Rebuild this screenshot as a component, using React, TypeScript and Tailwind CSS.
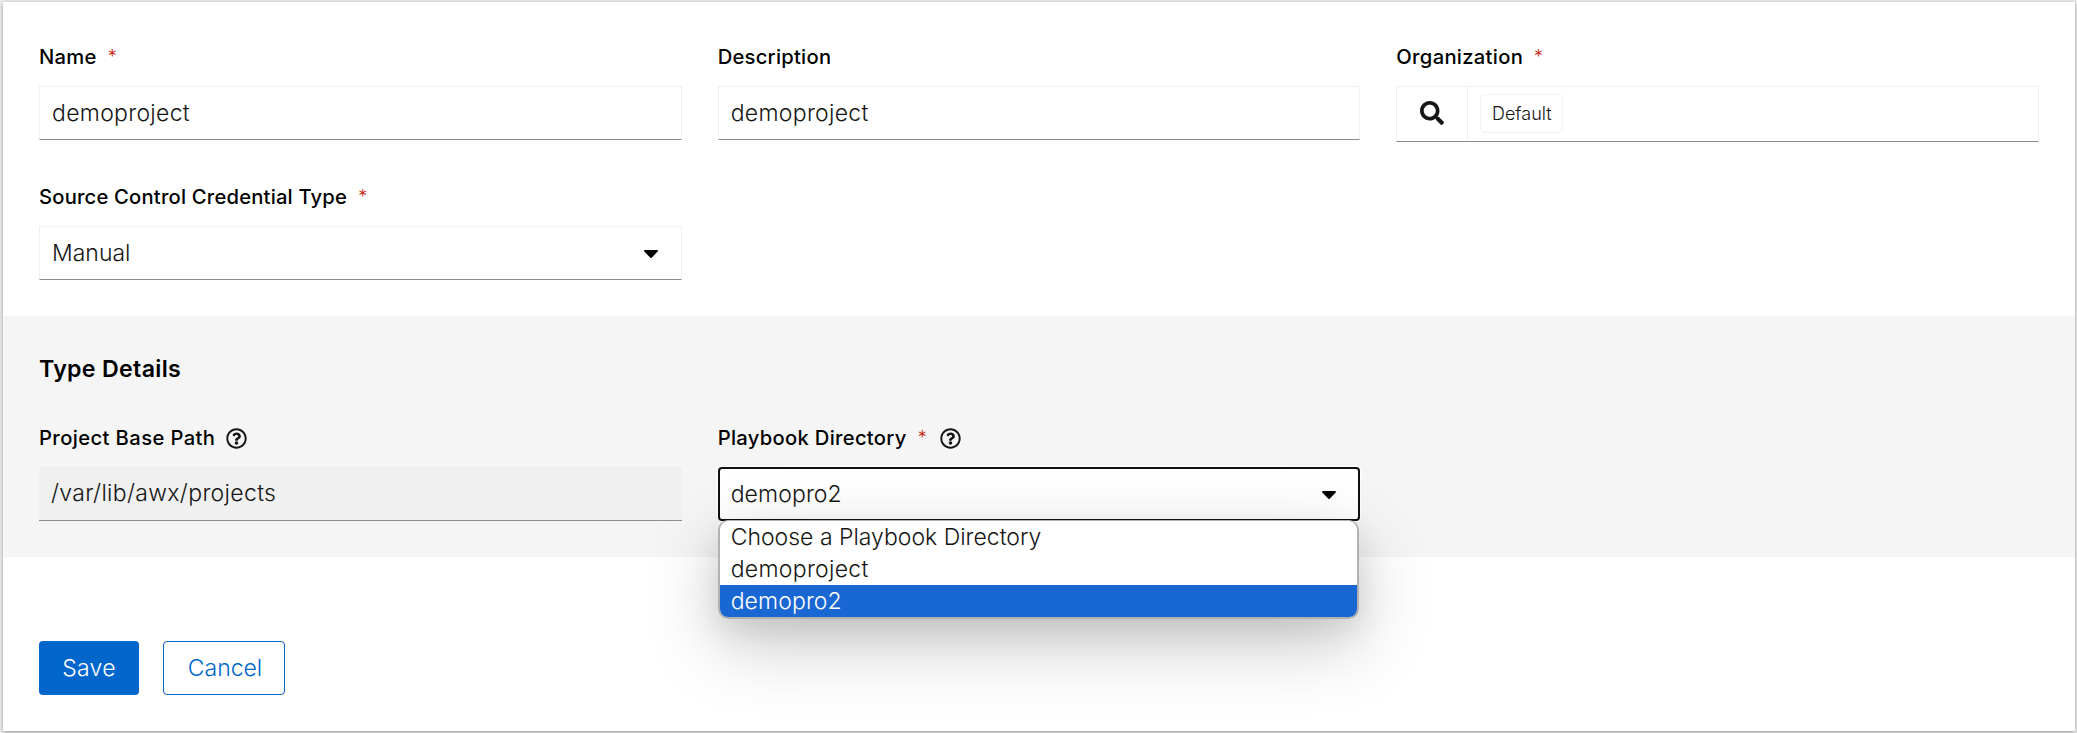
import type { ReactNode } from "react";
import { FaCaretDown, FaRegQuestionCircle, FaSearch } from "react-icons/fa";

function Label({ children, required, help }: { children: ReactNode; required?: boolean; help?: boolean }) {
  return (
    <div className="mb-[13px] flex h-8 items-center whitespace-nowrap text-[20.2px] font-medium leading-8 text-black">
      {children}
      {required && <span className="ml-[11px] text-[18px] font-light text-[#c9190b]">*</span>}
      {help && <FaRegQuestionCircle className={required ? "ml-[13px] size-[21px] text-[#151515]" : "ml-[11px] size-[21px] text-[#151515]"} />}
    </div>
  );
}

const field =
  "flex h-[54px] items-center border border-[#f0f0f0] border-b-[#8a8d90] bg-white pl-3 text-[23px] font-light leading-none text-[#151515] whitespace-nowrap";

export default function App() {
  return (
    <div className="h-[733px] w-[2077px] overflow-hidden bg-[#ebebeb] pl-[3px] pr-[2px] pt-[2px] font-['Inter',sans-serif]">
      <div className="flex h-[729px] flex-col bg-white shadow-[0_2px_4px_rgba(3,3,3,0.22),0_0_3px_rgba(3,3,3,0.16)]">
        <div className="grid h-[314px] grid-cols-3 content-start gap-x-9 gap-y-[39px] px-9 pt-[39px]">
          <div className="h-[101px]">
            <Label required><span className="tracking-[0.3px]">Name</span></Label>
            <div className={field}><span className="tracking-[0.3px]">demoproject</span></div>
          </div>
          <div className="h-[101px]">
            <Label><span className="tracking-[0.25px]">Description</span></Label>
            <div className={field}><span className="tracking-[0.3px]">demoproject</span></div>
          </div>
          <div className="h-[101px]">
            <Label required><span className="tracking-[0.3px]">Organization</span></Label>
            <div className="flex h-14 border border-[#f0f0f0] border-b-[#8a8d90]">
              <div className="flex w-[71px] items-center justify-center border-r border-[#f0f0f0] pb-[2px]">
                <FaSearch className="size-6 text-[#151515]" />
              </div>
              <div className="ml-3 mt-[7px] flex h-[39px] w-[83px] items-center justify-center rounded-[5px] border border-[#f0f0f0] text-[18px] font-light leading-none text-[#151515]">
                Default
              </div>
            </div>
          </div>
          <div>
            <Label required><span className="tracking-[0.2px]">Source Control Credential Type</span></Label>
            <div className={field + " justify-between pr-[18px]"}>
              <span>Manual</span>
              <FaCaretDown className="size-6 text-black" />
            </div>
          </div>
        </div>

        <div className="h-[241px] shrink-0 bg-[#f5f5f5] px-9 pt-[35px]">
          <h2 className="mb-[35px] h-9 text-[23.2px] font-semibold leading-9 tracking-[0.3px] text-black">Type Details</h2>
          <div className="grid grid-cols-3 gap-x-9">
            <div>
              <Label help><span className="tracking-[0.4px]">Project Base Path</span></Label>
              <div className="flex h-[54px] items-center border-b border-[#8a8d90] bg-[#f0f0f0] pl-3 text-[23px] font-light leading-none tracking-[0.33px] text-[#151515]">
                /var/lib/awx/projects
              </div>
            </div>
            <div className="relative">
              <Label required help><span className="tracking-[0.3px]">Playbook Directory</span></Label>
              <div className="flex h-[54px] items-center justify-between rounded-[4px] border-2 border-[#101010] bg-white pl-[11px] pr-[17px] text-[23px] font-light leading-none text-[#151515] shadow-[0_0_0_1px_#ffffff]">
                <span className="tracking-[0.1px]">demopro2</span>
                <FaCaretDown className="size-6 text-black" />
              </div>
              <div className="absolute left-0 right-[1px] top-[98px] z-10 h-[99px] rounded-[10px] shadow-[0_24px_72px_rgba(0,0,0,0.22),0_12px_30px_rgba(0,0,0,0.08)]" />
              <div className="absolute left-0 right-[1px] top-[98px] z-20 overflow-hidden rounded-[10px] border-2 border-t border-[#b2b2b2] bg-white text-[23px] font-light leading-8 text-[#151515]">
                <div className="h-8 pl-[11px]">Choose a Playbook Directory</div>
                <div className="h-8 pl-[11px] tracking-[0.3px]">demoproject</div>
                <div className="h-8 bg-[#1967d2] pl-[11px] tracking-[0.1px] text-white">demopro2</div>
              </div>
            </div>
          </div>
        </div>

        <div className="flex gap-6 px-9 pt-[84px]">
          <button className="h-[54px] w-[100px] rounded-[4px] bg-[#0066cc] text-[23px] font-light leading-none tracking-[0.3px] text-white">Save</button>
          <button className="h-[54px] w-[122px] rounded-[4px] border border-[#0066cc] bg-white pl-[2px] text-[23px] font-light leading-none text-[#0066cc]">Cancel</button>
        </div>
      </div>
    </div>
  );
}
